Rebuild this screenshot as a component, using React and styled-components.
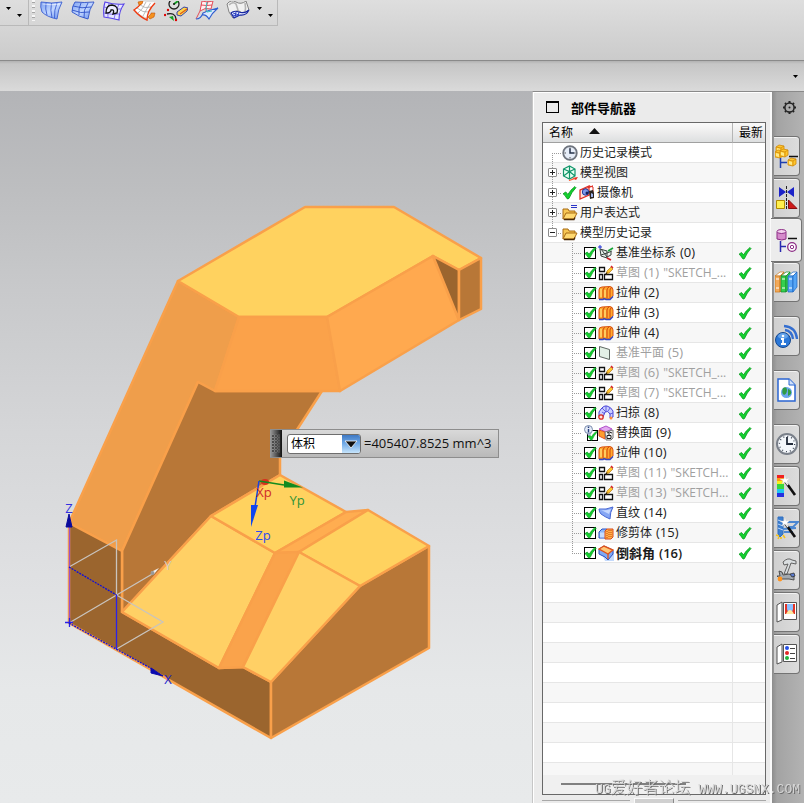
import React from 'react';
import styled, { createGlobalStyle, css } from 'styled-components';

const GlobalStyle = createGlobalStyle`
  *, *::before, *::after { box-sizing: border-box; }
  html, body { margin: 0; height: 100%; overflow: hidden; }
  #root { height: 100%; }
  body, button, input, select {
    font-family: "Open Sans", "Noto Sans CJK SC", sans-serif;
    font-size: 12px;
    color: #1c1c1c;
  }
  button, input, select { margin: 0; padding: 0; }
  svg { display: block; }
`;

const Page = styled.div`
  height: 100vh;
  display: flex;
  flex-direction: column;
  background: #d8d8d8;
`;

/* ---------- Ribbon ---------- */

const Ribbon = styled.header`
  height: 61px;
  flex: none;
  background: linear-gradient(#dedede, #cbcbcb);
  border-bottom: 1px solid #8a8a8a;
  display: flex;
  align-items: flex-start;
`;

const ToolGroup = styled.div`
  height: 26px;
  display: flex;
  align-items: flex-start;
  border-right: 1px solid #b9b9b9;
  border-bottom: 1px solid #b9b9b9;
  padding: 0 ${(p) => p.$end}px 0 ${(p) => p.$start}px;
`;

const Grip = styled.div`
  width: 3px;
  height: 21px;
  margin: 0 5px 0 3px;
  background: repeating-linear-gradient(#f6f6f6 0 2px, #a6a6a6 2px 3px, transparent 3px 5px);
`;

const ToolRow = styled.div`
  display: flex;
  gap: 7px;
  padding-right: 4px;
`;

const ToolButton = styled.button`
  width: 24px;
  height: 22px;
  border: 0;
  background: none;
`;

const CaretButton = styled.button`
  width: 11px;
  height: ${(p) => (p.$low ? 25 : 15)}px;
  border: 0;
  background: none;
  display: flex;
  align-items: flex-end;
  justify-content: center;
  padding-bottom: ${(p) => (p.$low ? 8 : 5)}px;
`;

const SubBar = styled.div`
  height: 30px;
  flex: none;
  display: flex;
  justify-content: flex-end;
  padding-right: 3px;
  background: linear-gradient(#b2b2b2, #c6c6c6 3px, #dadada);
`;

const Caret = () => (
  <svg width="5" height="3" viewBox="0 0 5 3"><path d="M0 0h5L2.5 3z" fill="#000" /></svg>
);

/* ---------- Workspace ---------- */

const Workspace = styled.div`
  flex: 1;
  min-height: 0;
  display: flex;
`;

const Canvas = styled.main`
  position: relative;
  flex: 1;
  min-width: 0;
  background: linear-gradient(#b3b4b7, #bdbec0 14%, #c8c9cb 28%, #d5d6d8 48%, #dfe0e2 68%, #e6e8e9 84%, #e8eaeb);
`;

const Scene = styled.svg`
  width: 100%;
  height: 100%;
`;

const Measure = styled.form`
  position: absolute;
  left: 270px;
  top: 338px;
  height: 29px;
  display: flex;
  align-items: center;
  border: 1px solid #8d8d8d;
  border-left: 0;
  background: linear-gradient(#d9d9d9, #b9b9b9);
  padding-right: 6px;
`;

const MeasureGrip = styled.div`
  align-self: stretch;
  display: grid;
  place-items: center;
  width: 12px;
  margin-right: 5px;
  background: linear-gradient(90deg, #9d9d9d, #4a4a4a 60%, #111);
`;

const Picker = styled.label`
  display: grid;
  grid-template-columns: 1fr 18px;
  width: 74px;
  height: 20px;
  border: 1px solid #6e6e6e;
  border-radius: 3px;
  background: #fff;
  overflow: hidden;

  svg { grid-area: 1 / 2; pointer-events: none; }
`;

const PickerSelect = styled.select`
  grid-area: 1 / 1 / 2 / 3;
  appearance: none;
  border: 0;
  background: none;
  padding-left: 3px;
  width: 100%;
  color: #000;
`;

const Reading = styled.output`
  margin-left: 3px;
  font-size: 13px;
  line-height: 18px;
  padding-bottom: 2px;
  white-space: nowrap;
  color: #111;
`;

/* ---------- Navigator ---------- */

const Panel = styled.section`
  width: 240px;
  flex: none;
  display: flex;
  flex-direction: column;
  background: #ebebeb;
  border-top: 1px solid #8a8a8a;
  border-left: 1px solid #c6c6c6;
  box-shadow: inset 1px 1px 0 #fff, inset -2px 0 0 #fafafa;
  padding: 0 6px 0 9px;
`;

const PanelTitle = styled.h1`
  margin: 0;
  height: 30px;
  display: flex;
  align-items: center;
  gap: 12px;
  padding-left: 4px;
  font-size: 13px;
  font-weight: 700;
  color: #000;
`;

const WindowBox = styled.span`
  width: 13px;
  height: 12px;
  border: 1px solid #000;
  border-top-width: 2px;
`;

const GridFrame = styled.div`
  flex: 1;
  min-height: 0;
  display: flex;
  flex-direction: column;
  border: 1px solid #686868;
  background: #f0f0f0;
`;

const GridBody = styled.div`
  flex: 1;
  min-height: 0;
  overflow: hidden;
`;

const Table = styled.table`
  width: 100%;
  table-layout: fixed;
  border-collapse: separate;
  border-spacing: 0;
`;

const HeadCell = styled.th`
  width: ${(p) => p.$width};
  height: 20px;
  padding: 0 0 0 ${(p) => p.$indent}px;
  text-align: left;
  font-weight: 400;
  line-height: 18px;
  white-space: nowrap;
  overflow: hidden;
  background: linear-gradient(#fafafa, #eeeeee 45%, #dddfe0);
  border-bottom: 1px solid #a0a0a0;
  border-right: 1px solid #b5b5b5;
  color: #000;
  &:last-child { border-right: 0; }
`;

const HeadLabel = styled.span`
  display: flex;
  align-items: center;
  gap: 16px;
  svg { margin-bottom: 3px; }
`;

const Row = styled.tr`
  background: ${(p) => (p.$alt ? '#f7f7f7' : '#ffffff')};
`;

const Cell = styled.td`
  height: 20px;
  padding: 0;
  border-bottom: 1px solid #e6e6e6;
  border-right: 1px solid #e6e6e6;
  &:last-child { border-right: 0; }
`;

const Node = styled.div`
  height: 19px;
  display: flex;
  align-items: center;
  padding-left: ${(p) => (p.$deep ? 29 : 5)}px;
  white-space: nowrap;
  overflow: hidden;
`;

const dotsDown = 'repeating-linear-gradient(#9a9a9a 0 1px, transparent 1px 2px)';
const dotsAcross = 'repeating-linear-gradient(90deg, #9a9a9a 0 1px, transparent 1px 2px)';
const reach = { all: ['0', '20px'], lower: ['10px', '10px'], upper: ['0', '10px'] };

const Branch = styled.span`
  flex: none;
  align-self: stretch;
  display: flex;
  align-items: center;
  width: ${(p) => (p.$deep ? 12 : 14)}px;
  background-repeat: no-repeat;
  ${(p) => {
    const [top, len] = reach[p.$span];
    const x = p.$deep ? '0' : '4px';
    return css`
      background-image: ${dotsDown}, ${dotsAcross};
      background-position: ${x} ${top}, ${x} 10px;
      background-size: 1px ${len}, 10px 1px;
    `;
  }}
`;

const Expander = styled.button`
  width: 9px;
  height: 9px;
  border: 1px solid #8c8c8c;
  border-radius: 1px;
  background: #fff;
  display: grid;
  place-items: center;
`;

const IconSlot = styled.span`
  flex: none;
  width: ${(p) => (p.$narrow ? 17 : 18)}px;
`;

const Tick = styled.label`
  flex: none;
  display: grid;
  width: 14px;
  height: 16px;
  align-items: center;
  svg { grid-area: 1 / 1; pointer-events: none; z-index: 1; }
`;

const TickBox = styled.input`
  grid-area: 1 / 1;
  appearance: none;
  width: ${(p) => (p.$badged ? 11 : 12)}px;
  height: ${(p) => (p.$badged ? 11 : 12)}px;
  justify-self: ${(p) => (p.$badged ? 'end' : 'start')};
  align-self: ${(p) => (p.$badged ? 'end' : 'center')};
  border: 1px solid #000;
  background: #fff;
  outline: 0;

  & + svg { justify-self: ${(p) => (p.$badged ? 'end' : 'start')}; align-self: ${(p) => (p.$badged ? 'end' : 'center')}; }
`;

const NodeText = styled.span`
  display: flex;
  align-items: baseline;
  color: ${(p) => (p.$muted ? '#a0a0a0' : '#1c1c1c')};
  font-size: ${(p) => (p.$bold ? 13 : 12)}px;
  font-weight: ${(p) => (p.$bold ? 700 : 400)};
  line-height: 18px;
`;

const NodeIndex = styled.span`
  font-size: 13px;
  font-weight: ${(p) => (p.$bold ? 600 : 400)};
  margin-left: 4px;
`;

const NodeAlias = styled.span`
  font-size: 12px;
  margin-left: 4px;
`;

const CheckSlot = styled.div`
  display: flex;
  padding-left: 5px;
`;

const ScrollStrip = styled.div`
  height: 19px;
  flex: none;
  padding: 8px 79px 0 18px;
`;

const ScrollThumb = styled.div`
  height: 2px;
  background: #808080;
`;

const PanelFoot = styled.div`
  height: 8px;
  flex: none;
  display: flex;
  gap: 4px;
  align-items: flex-end;
`;

const FootRule = styled.div`
  flex: ${(p) => p.$grow};
  height: 3px;
  border-top: 1px solid #a8a8a8;
`;

const FootHandle = styled.div`
  width: 40px;
  height: 5px;
  background: #d0d0d0;
  border: 1px solid #fafafa;
  border-right-color: #8a8a8a;
  border-bottom: 0;
`;

/* ---------- Resource bar ---------- */

const ResourceBar = styled.nav`
  width: 32px;
  flex: none;
  display: flex;
  flex-direction: column;
  align-items: flex-start;
  gap: 14px;
  background: linear-gradient(90deg, #8d8d8d, #a3a3a3 5px, #b3b3b3);
  border-top: 1px solid #8a8a8a;
`;

const GearButton = styled.button`
  width: 32px;
  height: 30px;
  border: 0;
  background: none;
  display: grid;
  place-items: center;
  padding-left: 2px;
`;

const TabGroup = styled.div`
  display: flex;
  flex-direction: column;
  gap: 2px;
`;

const Tab = styled.button`
  width: 26px;
  height: 40px;
  margin-left: 2px;
  display: grid;
  place-items: center;
  border: 1px solid #737373;
  border-left: 0;
  border-radius: 0 4px 4px 0;
  background: linear-gradient(90deg, #d0d0d0, #dcdcdc);
  box-shadow: inset 0 1px 0 #f2f2f2;
  ${(p) => p.$active && css`
    width: 31px;
    height: 44px;
    margin: -2px 0 -2px -1px;
    background: #ececec;
    padding-left: 1px;
  `}
`;

const TabStack = styled.div`
  display: flex;
  flex-direction: column;
  gap: 14px;
`;

const Watermark = styled.div`
  position: fixed;
  right: 4px;
  bottom: 3px;
  display: flex;
  align-items: baseline;
  gap: 8px;
  font-family: "Liberation Mono", "Noto Sans CJK SC", monospace;
  font-size: 13px;
  line-height: 20px;
  white-space: pre;
  color: #d6d6d6;
  text-shadow: 1px 1px 0 #6a6a6a;
  pointer-events: none;
`;

const WatermarkName = styled.span`
  font-family: "Noto Sans CJK SC", sans-serif;
  font-size: 16px;
  font-weight: 300;
`;

/* ---------- Toolbar drawings ---------- */

const SheetDefs = () => (
  <defs>
    <linearGradient id="sheet" x1="0" x2="1" y1="0" y2="1">
      <stop offset="0" stopColor="#7ea2f2" /><stop offset=".5" stopColor="#c3d7ff" /><stop offset="1" stopColor="#5f8aee" />
    </linearGradient>
  </defs>
);

const toolIcons = {
  ruled: (
    <>
      <SheetDefs />
      <path d="M1 1Q12 3 22 1Q18 8 17 18Q7 16 2 11Q0 6 1 1z" fill="url(#sheet)" stroke="#3a5ed0" strokeWidth=".9" />
      <path d="M6 2Q5 8 7 14M11.500 2Q10 9 12 17M17 2Q14 9 14.500 17" fill="none" stroke="#3a5ed0" strokeWidth=".9" />
      <path d="M2.500 3Q12 4.500 20 3" stroke="#fff" fill="none" opacity=".6" />
    </>
  ),
  mesh: (
    <>
      <path d="M4 1Q13 2 23 1Q18 8 17 18Q8 16 1 11Q1 5 4 1z" fill="url(#sheet)" stroke="#2f52c8" strokeWidth=".9" />
      <path d="M10 2Q7 8 8 14M17 2Q12 9 13 17M2 5Q11 8 20 6M1 9Q10 13 18 11" fill="none" stroke="#2f52c8" strokeWidth=".9" />
    </>
  ),
  patch: (
    <>
      <path d="M3 1Q13 4 22 3Q17 10 17 19Q9 17 2 16Q1 7 3 1z" fill="#e6e6ff" stroke="#5540e8" strokeWidth="1.100" />
      <path d="M7 2Q5 9 6 17M17 3Q13 11 12 18M2 6Q12 9 19 8M2 12Q10 14 17 13" fill="none" stroke="#6a55ee" strokeWidth=".8" />
      <path d="M4 12Q4 4 10 4Q17 5 15 12L11 13Q13 8 9 9Q9 12 4 12z" fill="#ededff" stroke="#111" strokeWidth="1.300" />
    </>
  ),
  offset: (
    <>
      <path d="M9 0Q15 2 22 1Q16 8 15 17Q8 15 1 9Q6 6 9 0z" fill="#fff" />
      <path d="M13 1Q10 8 5 12M17.500 2Q13 9 10 15M7 4Q12 8 18 6M4 7Q10 12 16 11" fill="none" stroke="#aaa" strokeWidth=".8" />
      <path d="M9 1Q6 6 1 9Q7 16 14 19Q14 10 22 2" fill="none" stroke="#ee3b12" strokeWidth="1.400" />
      <path d="M5 1l5-1-1 3-3 1zM15 16l3-3 0-1 4 0-1 4-4 2z" fill="#f5921e" stroke="#c25207" strokeWidth=".6" />
    </>
  ),
  section: (
    <>
      <circle cx="10" cy="3" r="5" fill="none" stroke="#222" strokeWidth="1.300" />
      <path d="M10 3l4-3" stroke="#119c20" strokeWidth="1.800" /><circle cx="10" cy="3" r="1" fill="#111" />
      <path d="M3 13Q11 11 12 18" fill="none" stroke="#222" strokeWidth="1.300" />
      <path d="M5 16l4-1 1 5z" fill="#12a020" />
      <path d="M13 11l7-5 4 1-1 3-6 5-4-1z" fill="#ffd54a" stroke="#2434a8" strokeWidth=".9" /><path d="M16 13l7-5" stroke="#e05a1a" strokeWidth="1.300" />
      <circle cx="4" cy="9" r="1.200" fill="#d00" /><circle cx="1" cy="14" r="1.200" fill="#d00" /><circle cx="12" cy="19" r="1.200" fill="#d00" />
    </>
  ),
  law: (
    <>
      <path d="M7 0Q12 2 18 0L16 8Q10 6 5 10z" fill="#fff0f0" stroke="#e23b48" strokeWidth=".9" />
      <path d="M5 10L1 18M13 0Q10 7 11 13M6 4Q12 5 17 4" fill="none" stroke="#e23b48" strokeWidth=".9" />
      <path d="M1 18Q6 18 8 12Q14 9 23 7Q17 12 14 18Q11 13 7 14" fill="#dbe9ff" stroke="#2f5ed0" strokeWidth="1.100" />
      <path d="M12 1Q10 8 12 11L17 10" fill="none" stroke="#35bfc0" />
    </>
  ),
  fabric: (
    <>
      <path d="M1 3Q5-2 10 1Q15 4 20 0L23 9Q18 14 13 10Q9 8 7 17Q2 12 1 3z" fill="#f1f1f1" stroke="#777" strokeWidth=".9" />
      <path d="M3 4Q7 0 10 3L12 9M19 2Q20 7 19 11" fill="none" stroke="#b4b4b4" strokeWidth="1.600" />
      <path d="M5 12Q8 9 13 11Q18 13 23 9Q20 15 14 14L8 17z" fill="#dfe5ff" stroke="#1626a0" strokeWidth="1.100" />
      <path d="M7 12l6 2M6 14l6 1M10 11l-1 5M13 11l-1 4" stroke="#1f35c0" strokeWidth=".9" />
    </>
  ),
};

const tools = [
  ['ruled', '直纹'], ['mesh', '通过曲线网格'], ['patch', '修补曲面'], ['offset', '偏置曲面'],
  ['section', '剖切曲面'], ['law', '规律延伸'], ['fabric', '曲面'],
];

/* ---------- Tree drawings ---------- */

const CheckMark = ({ size = 14 }) => (
  <svg width={size} height={size} viewBox="0 0 14 14">
    <path d="M1 8.200L3.500 6.500L5.500 8.800Q8 4.500 12 1.500L13 2.500Q9 6.500 6.500 12.500Q5.500 13.500 4.500 12.500Q3 9.500 1 8.200z" fill="#12d02e" stroke="#0a9a20" strokeWidth=".8" />
  </svg>
);

const Small = ({ children }) => <svg width="16" height="16" viewBox="0 0 16 16">{children}</svg>;

const treeIcons = {
  clock: (
    <>
      <circle cx="8" cy="8" r="6.800" fill="#e6edf8" stroke="#6e747e" strokeWidth="1.800" />
      <path d="M8 2.500v1.500M8 12v1.500M2.500 8H4M12 8h1.500" stroke="#555" />
      <path d="M8 3.500V8h4" stroke="#25324a" strokeWidth="1.500" fill="none" />
    </>
  ),
  views: (
    <>
      <path d="M1.500 4l6-3 5.500 3v7l-5.500 3-6-3zM1.500 4l6 2.500L13 4M7.500 1v13M1.500 11l6-4.500L13 11" fill="#e7fff2" stroke="#12966b" strokeWidth="1.200" />
      <path d="M10 13l6-1-2 3z" fill="#e92a1e" /><path d="M7 15.500l6-2" stroke="#ff5a34" strokeWidth="1.200" />
    </>
  ),
  camera: (
    <>
      <path d="M1 5l9-4v9l-9 4z" fill="#ffe1d8" stroke="#e03127" strokeWidth="1.300" />
      <path d="M1 5l4-1 9-3-4 1M10 1l4 1v5" fill="none" stroke="#e03127" />
      <circle cx="6.500" cy="7" r="3.200" fill="#7d98ea" stroke="#223b9c" /><circle cx="8" cy="8" r="1.500" fill="#16205a" />
      <path d="M10 6l4-1 1 3v5l-4 1z" fill="#2a2422" /><path d="M12 8l2 1v3h-2z" fill="#9fb4ee" />
    </>
  ),
  folder: (
    <>
      <path d="M1 14V4h5l1 2h6v3" fill="#f7c653" stroke="#a86b12" />
      <path d="M1 14L4 8h11l-3 6z" fill="#ffd970" stroke="#a86b12" /><path d="M2 14.500h10l1-2" stroke="#4b2b06" strokeWidth="1.300" fill="none" />
    </>
  ),
  expressions: (
    <>
      <path d="M1 14V4h5l1 2h6v3" fill="#f7c653" stroke="#a86b12" />
      <path d="M1 14L4 8h11l-3 6z" fill="#ffd970" stroke="#a86b12" /><path d="M2 14.500h10l1-2" stroke="#4b2b06" strokeWidth="1.300" fill="none" />
      <path d="M9 .500h6M9 2.500h6" stroke="#2a34c8" />
    </>
  ),
  csys: (
    <>
      <path d="M2 4l7 2v7L3 11zM3 10l6-2 5-2M9 12l4-2V7M3 4l6 8" fill="#e5efe9" stroke="#39423e" />
      <path d="M0 2h4M2 0v4" stroke="#2030d8" /><path d="M10 6l5-3" stroke="#15a536" strokeWidth="1.600" /><path d="M9 13l4 2" stroke="#d31d24" strokeWidth="1.600" />
    </>
  ),
  sketch: (
    <>
      <path d="M1.500 2.500h5v4h-5zM1.500 9.500h3v5h-3zM6.500 9.500h8v5h-8z" fill="#fff" stroke="#111" strokeWidth="1.300" />
      <path d="M8 9l1-3 4-4 2 2-4 4z" fill="#ffc52f" stroke="#a8690a" strokeWidth=".6" /><path d="M13 1l2 2" stroke="#d8202a" strokeWidth="1.500" /><path d="M7.500 9.500l1.500-2" stroke="#000" />
    </>
  ),
  extrude: (
    <>
      <path d="M1 5Q1 2 4 2L12 1.500Q15 2 15 5V11L12 14H1z" fill="#ffa92e" stroke="#d95312" />
      <path d="M5 13V5Q5 3 7 2.500M9 13V5Q9 3 11 2M12 13V5Q12 3 14 2.500" fill="none" stroke="#d0440e" />
      <path d="M3 4v8M7 5v7" stroke="#ffe07c" strokeWidth="1.300" />
      <path d="M1 14.500h4l1-1 2 1h4l3-3" fill="none" stroke="#3349c4" strokeWidth="1.400" />
    </>
  ),
  plane: <path d="M1.500 1.500l10 3v10l-10-3z" fill="#e3f0e6" stroke="#5f6862" />,
  sweep: (
    <>
      <path d="M1 7Q5 0 9 1Q13 2 15 6V12L12 13V9Q10 5 7 7L5 12L1 11z" fill="#c9cdff" stroke="#4a45d8" />
      <path d="M4 3l4 4M8 1v5M12 3l-2 3M12 9l3-1M4 7l3 2" stroke="#4a45d8" strokeWidth=".8" />
      <circle cx="3" cy="12" r="2.200" fill="#ffe1dc" stroke="#d92a22" strokeWidth="1.300" /><circle cx="13" cy="13" r="1.500" fill="#ff8b38" />
    </>
  ),
  replace: (
    <>
      <path d="M1 4l7-3 6 3-6 3z" fill="#e2a8f0" stroke="#b04fca" />
      <path d="M1 5l6 2v7l-6-3z" fill="#ff9d2e" stroke="#e0502b" /><path d="M7 7l8-2v8l-2 2H8z" fill="#f4f4f4" stroke="#777" />
      <path d="M9 8q2-2 5 0M9 10.500h4v3H9zM11 8v3" fill="none" stroke="#222" />
    </>
  ),
  ruled: (
    <>
      <path d="M1 4Q8 5 15 2Q12 7 12 14Q7 12 3 9Q1 7 1 4z" fill="#86a6f4" stroke="#4766d4" /><path d="M3 5Q8 6 13 4L11 9z" fill="#c6d7ff" />
    </>
  ),
  trim: (
    <>
      <path d="M1 7l3-3h5v9H1z" fill="#8db7f8" stroke="#2c50c4" /><path d="M2 7.500h5v5H2z" fill="#c6dcff" />
      <path d="M7 6l2-2h6v8l-2 2H7z" fill="#ffb344" stroke="#d9481a" /><path d="M9 6v7M11 5v8M13 5v8" stroke="#cf3b1a" strokeDasharray="1 1" />
    </>
  ),
  chamfer: (
    <>
      <path d="M3 6h13v10H7z" fill="#c3d9fb" />
      <path d="M1 4l5-3 9 4v4l-5 6-3-3-6-3z" fill="#7ea9f6" stroke="#2c50c4" />
      <path d="M1 4l5-3 9 4-5 4z" fill="#ffc878" stroke="#e0531a" strokeWidth="1.400" /><path d="M10 9v5" stroke="#e0531a" strokeWidth="1.300" />
    </>
  ),
};

const roots = [
  { icon: 'clock', name: '历史记录模式', span: 'lower' },
  { icon: 'views', name: '模型视图', span: 'all', mark: '+' },
  { icon: 'camera', name: '摄像机', span: 'all', mark: '+', ok: true },
  { icon: 'expressions', name: '用户表达式', span: 'all', mark: '+' },
  { icon: 'folder', name: '模型历史记录', span: 'upper', mark: '-' },
];

const features = [
  { icon: 'csys', name: '基准坐标系', index: 0 },
  { icon: 'sketch', name: '草图', index: 1, alias: '"SKETCH_...', muted: true },
  { icon: 'extrude', name: '拉伸', index: 2 },
  { icon: 'extrude', name: '拉伸', index: 3 },
  { icon: 'extrude', name: '拉伸', index: 4 },
  { icon: 'plane', name: '基准平面', index: 5, muted: true },
  { icon: 'sketch', name: '草图', index: 6, alias: '"SKETCH_...', muted: true },
  { icon: 'sketch', name: '草图', index: 7, alias: '"SKETCH_...', muted: true },
  { icon: 'sweep', name: '扫掠', index: 8 },
  { icon: 'replace', name: '替换面', index: 9, info: true },
  { icon: 'extrude', name: '拉伸', index: 10 },
  { icon: 'sketch', name: '草图', index: 11, alias: '"SKETCH...', muted: true },
  { icon: 'sketch', name: '草图', index: 13, alias: '"SKETCH...', muted: true },
  { icon: 'ruled', name: '直纹', index: 14 },
  { icon: 'trim', name: '修剪体', index: 15 },
  { icon: 'chamfer', name: '倒斜角', index: 16, bold: true },
];

const InfoBadge = () => (
  <svg width="14" height="16" viewBox="0 0 14 16">
    <path d="M3 8l2 3 2-3z" fill="#d6e0f2" stroke="#7b8cac" strokeWidth=".8" />
    <circle cx="4.500" cy="4.500" r="4" fill="#e4ebf8" stroke="#7b8cac" />
    <path d="M4.500 4V7.500M4.500 1.500V3" stroke="#223a7a" strokeWidth="1.400" />
  </svg>
);

/* ---------- Resource bar drawings ---------- */

const Wand = () => (
  <>
    <path d="M10 7l10 14" stroke="#111" strokeWidth="2.600" /><path d="M10 7l3 4" stroke="#eee" strokeWidth="1.500" />
    <path d="M10 1l1 4 4-1-3 3 2 3-4-2-3 2 1-3-3-2 4 0z" fill="#fff" stroke="#ccc" strokeWidth=".4" />
  </>
);

const Cube = ({ x, y }) => (
  <g transform={`translate(${x} ${y})`} stroke="#d08a0a" strokeWidth=".8">
    <path d="M0 2l3-2 5 1v5L5 8 0 7z" fill="#ffc62c" /><path d="M0 2l5 1 3-2M5 3v5" fill="none" /><path d="M1 3l3 1v3L1 6z" fill="#ffe98a" stroke="none" />
  </g>
);

const Book = ({ x, front, back }) => (
  <g transform={`translate(${x} 0)`}>
    <path d="M0 6l5-4h4L5 6z" fill="#fff" stroke={back} strokeWidth=".7" />
    <path d="M0 6h5v16H0z" fill={front} stroke={back} strokeWidth=".7" /><path d="M5 6l4-4v15l-4 5z" fill={front} stroke={back} strokeWidth=".7" />
    <path d="M1 9h3M1 18h3" stroke="#fff" />
  </g>
);

const tabIcons = {
  assembly: (
    <>
      <Cube x={1} y={1} /><Cube x={0} y={6} /><Cube x={5} y={5} /><Cube x={13} y={14} />
      <path d="M14 12.500h9" stroke="#111" strokeWidth="1.500" /><path d="M5.500 14v10M5 18.500h7" stroke="#1d3fb0" strokeWidth="1.500" fill="none" />
    </>
  ),
  constraint: (
    <>
      <path d="M4 1v10l7-5zM19 1v10l-7-5z" fill="#1b22c8" /><path d="M11.500 0v24" stroke="#222" strokeDasharray="3 1" />
      <path d="M1.500 14.500h8v8h-8z" fill="#fff04d" stroke="#b18a00" /><path d="M13.500 14v8.500H22z" fill="#cf1a1a" stroke="#8a0d0d" />
    </>
  ),
  part: (
    <>
      <path d="M2 4v7q5 2 9 0V4" fill="#d58acb" stroke="#8d2d86" /><ellipse cx="6.500" cy="3.500" rx="4.500" ry="2" fill="#f3d3ef" stroke="#8d2d86" />
      <path d="M13 10.500h9" stroke="#111" strokeWidth="1.500" /><path d="M5.500 13v11M5 18.500h6" stroke="#2a2ab0" strokeWidth="1.500" fill="none" />
      <circle cx="17" cy="19" r="4.300" fill="#fff" stroke="#8d2d86" strokeWidth="1.300" /><circle cx="17" cy="19" r="1.700" fill="none" stroke="#8d2d86" />
    </>
  ),
  reuse: (
    <><Book x={0} front="#f2a95a" back="#c9751a" /><Book x={6} front="#34cf4e" back="#138a2c" /><Book x={13} front="#55a5f5" back="#1b64c2" /></>
  ),
  web: (
    <>
      <circle cx="8" cy="16" r="7.500" fill="#2b78d8" stroke="#14478f" /><ellipse cx="8" cy="12" rx="5" ry="3" fill="#8cc0f5" opacity=".6" />
      <path d="M8 15v5M6 15h3M6 20h5" stroke="#fff" strokeWidth="1.800" /><circle cx="8" cy="12" r="1.300" fill="#fff" />
      <path d="M10 6q7 1 8 9M9 2q12 1 13 13" fill="none" stroke="#356fd0" strokeWidth="2.300" />
    </>
  ),
  browser: (
    <>
      <path d="M3 1h11l6 6v16H3z" fill="#fff" stroke="#2b66d2" strokeWidth="1.500" /><path d="M14 1v6h6" fill="#cfe0fa" stroke="#2b66d2" />
      <circle cx="11.500" cy="14.500" r="5.500" fill="#6aa5ec" /><path d="M8 10q4-2 4 2t-3 5q-3-2-1-7zM13 11q4 1 3 5l-3 2z" fill="#2f9a45" />
    </>
  ),
  history: (
    <>
      <circle cx="12" cy="12" r="10" fill="#f4f7fb" stroke="#7a808a" strokeWidth="2" /><circle cx="12" cy="12" r="7.600" fill="none" stroke="#3c4654" strokeDasharray="1 2.980" strokeWidth="1.300" />
      <path d="M12 5v7h6" fill="none" stroke="#222b3a" strokeWidth="1.800" />
    </>
  ),
  spectrum: (
    <>
      <path d="M2 1h7v3H2z" fill="#f02020" /><path d="M2 4h7v3H2z" fill="#ff9b12" /><path d="M2 7h7v3H2z" fill="#f8ee1e" /><path d="M2 10h7v5H2z" fill="#38d83c" /><path d="M2 15h7v4H2z" fill="#1ec6f0" /><path d="M2 19h7v4H2z" fill="#2430e0" />
      <Wand />
    </>
  ),
  machining: (
    <>
      <path d="M3 1h5v17l-3 3-2-3z" fill="#3c7fd0" stroke="#2f6fc0" /><path d="M3 4l5 2M3 8l5 2M3 12l5 2" stroke="#bcd7fa" />
      <path d="M1 19l3 1M8 19l2 3M3 23l1-2M6 21v2" stroke="#f5c21d" strokeWidth="1.600" /><path d="M12 6h11l-5 5h-6M8 13l13-1M9 16h9" stroke="#4a86d2" fill="none" strokeWidth="1.800" />
      <Wand />
    </>
  ),
  mechanism: (
    <>
      <path d="M8 4Q13-1 17 2L21 3V6L16 5L12 16H9L13 6L9 7z" fill="#dadee0" stroke="#555" strokeWidth=".9" />
      <path d="M4 13l3 1 1 3 6-1 5 2v4l-5-1-9 0-3-3 3 0z" fill="#a3a9af" stroke="#444" strokeWidth=".9" /><circle cx="5" cy="21" r="2.400" fill="#ff941e" /><path d="M15 16l4-1 1 3-3 1z" fill="#5a7bd0" stroke="#333" strokeWidth=".8" />
    </>
  ),
  visual: (
    <>
      <path d="M2 5l5-3v18l-5 2z" fill="#fff" stroke="#555" /><path d="M8.500 2.500h13v17h-13z" fill="#fff" stroke="#555" />
      <path d="M10 4h10v10H10z" fill="#e33425" /><path d="M12 4h6v5l-1 3h-4l-1-3z" fill="#8cc0ff" /><path d="M11 14q4-8 8 0z" fill="#ffe9a0" />
    </>
  ),
  roles: (
    <>
      <path d="M2 5l5-3v18l-5 2z" fill="#fff" stroke="#555" /><path d="M8.500 2.500h13v17h-13z" fill="#fff" stroke="#555" />
      <circle cx="12" cy="6" r="2" fill="#2450e8" /><circle cx="12" cy="11" r="2" fill="#e02828" /><circle cx="12" cy="16" r="2" fill="#1fb43a" />
      <path d="M15 6.500h5M15 11.500h5M15 16.500h5" stroke="#444" />
    </>
  ),
};

const tabGroups = [
  [['assembly', '装配导航器'], ['constraint', '约束导航器'], ['part', '部件导航器'], ['reuse', '重用库']],
  [['web', 'HD3D 工具']],
  [['browser', 'Web 浏览器']],
  [['history', '历史记录'], ['spectrum', '系统材料'], ['machining', '加工向导'], ['mechanism', '机构'], ['visual', '可视化场景'], ['roles', '角色']],
];

/* ---------- 3D scene ---------- */

const edge = '#f9a04a';

const faces = [
  ['178,281 239,317 215,391 198,382 122,551 69,523', '#ef9e4b'],
  ['198,382 215,391 322,391 280,456 280,475 211,516 122,612 122,551', '#b87737'],
  ['178,281 305,207 394,207 481,258 459,270 433,256 327,317 239,317', '#ffd25f'],
  ['239,317 327,317 340,391 215,391', '#fba24a'],
  ['327,317 433,256 459,320 340,391', '#ffa94f'],
  ['433,256 459,270 459,320', '#9b652e'],
  ['459,270 481,258 481,309 459,320', '#b87737'],
  ['69,523 122,551 122,612 219,668 243,667 271,682 271,738 69,623', '#9b652e'],
  ['271,682 360,586 429,546 429,648 271,738', '#b87737'],
  ['122,612 211,516 275,553 219,668', '#ffd065'],
  ['211,516 280,475 346,512 275,553', '#ffd25f'],
  ['275,553 346,512 368,510 299,552', '#ffad50'],
  ['275,553 299,552 243,667 219,668', '#faa34b'],
  ['299,552 368,510 429,546 360,586', '#ffd25f'],
  ['299,552 360,586 271,682 243,667', '#ffd065'],
];

const Label = styled.text`
  font-family: "Open Sans", sans-serif;
  font-size: 13px;
  text-anchor: middle;
`;

const Model = () => (
  <Scene viewBox="0 91 532 712" preserveAspectRatio="xMinYMin meet" role="img" aria-label="三维模型">
    {faces.map(([points, fill]) => (
      <polygon key={points} points={points} fill={fill} stroke={edge} strokeWidth="2.500" strokeLinejoin="round" />
    ))}
    <g fill="none" stroke="#c9c4be" strokeWidth="1.300">
      <path d="M69 567L116.500 540V595M69 623L154 573M116.500 595L163 622L116.500 649" />
    </g>
    <g fill="none" stroke="#2a22e8" strokeWidth="1.300">
      <path d="M69.500 525V623" stroke="#9a52c8" /><path d="M116.500 595V649M65 622.500h8M69.500 618v9" />
      <path d="M69 567L116.500 595M69 623L154 670" stroke="#1010d8" strokeDasharray="2 1" />
    </g>
    <path d="M69 514l3 13h-6z" fill="#0a0a9c" stroke="#0a0a9c" /><path d="M163 676l-12-8v5z" fill="#0a0ab0" stroke="#0a0ab0" />
    <path d="M151 572l8-4-5 6z" fill="#f2f2f2" /><circle cx="152.500" cy="573" r="2" fill="#999" />
    <Label x="69" y="513" fill="#3131e0">Z</Label>
    <Label x="168" y="684" fill="#2020d0">X</Label>
    <Label x="168" y="570" fill="#cfcac4">Y</Label>
    <ellipse cx="265" cy="482" rx="4" ry="3" fill="#d8301e" />
    <path d="M259 481L284 485" stroke="#138a1e" strokeWidth="1.500" /><path d="M303 487.500l-19-7v7z" fill="#128a20" />
    <path d="M259 481L255 507" stroke="#1540e8" strokeWidth="1.500" /><path d="M251 527l0-22h7z" fill="#1046f0" />
    <Label x="264" y="497" fill="#d02a2a">Xp</Label>
    <Label x="297" y="505" fill="#2f9438">Yp</Label>
    <Label x="263" y="540" fill="#2c4cf0">Zp</Label>
  </Scene>
);

const FILLER_ROWS = 40;

function RootRow({ node, alt }) {
  return (
    <Row $alt={alt}>
      <Cell>
        <Node>
          <Branch $span={node.span}>
            {node.mark && (
              <Expander aria-label={node.name}>
                <svg width="5" height="5" viewBox="0 0 5 5"><path d={node.mark === '+' ? 'M0 2h5v1H0zM2 0h1v5H2z' : 'M0 2h5v1H0z'} fill="#222" /></svg>
              </Expander>
            )}
          </Branch>
          {node.ok && <IconSlot $narrow><CheckMark size={15} /></IconSlot>}
          <IconSlot><Small>{treeIcons[node.icon]}</Small></IconSlot>
          <NodeText>{node.name}</NodeText>
        </Node>
      </Cell>
      <Cell />
    </Row>
  );
}

function FeatureRow({ node, alt }) {
  return (
    <Row $alt={alt}>
      <Cell>
        <Node $deep>
          <Branch $deep $span={node.bold ? 'upper' : 'all'} />
          <Tick>
            <TickBox type="checkbox" defaultChecked aria-label={`${node.name} (${node.index})`} $badged={node.info} />
            <CheckMark size={node.info ? 11 : 13} />
            {node.info && <InfoBadge />}
          </Tick>
          <IconSlot><Small>{treeIcons[node.icon]}</Small></IconSlot>
          <NodeText $muted={node.muted} $bold={node.bold}>
            {node.name}
            <NodeIndex $bold={node.bold}>({node.index})</NodeIndex>
            {node.alias && <NodeAlias>{node.alias}</NodeAlias>}
          </NodeText>
        </Node>
      </Cell>
      <Cell><CheckSlot><CheckMark /></CheckSlot></Cell>
    </Row>
  );
}

function ResourceColumn() {
  return (
    <ResourceBar>
      <GearButton aria-label="资源条选项">
        <svg width="15" height="15" viewBox="0 0 15 15">
          <circle cx="7.500" cy="7.500" r="4.600" fill="none" stroke="#222" strokeWidth="1.500" />
          <path d="M7.500 1v2M7.500 12v2M1 7.500h2M12 7.500h2M3 3l1 1M11 11l1 1M3 12l1-1M11 4l1-1" stroke="#222" strokeWidth="2" />
          <circle cx="7.500" cy="7.500" r="1" fill="#222" />
        </svg>
      </GearButton>
      <TabStack>
        {tabGroups.map((group) => (
          <TabGroup key={group[0][0]}>
            {group.map(([id, label]) => (
              <Tab key={id} aria-label={label} $active={id === 'part'}>
                <svg width="24" height="24" viewBox="0 0 24 24">{tabIcons[id]}</svg>
              </Tab>
            ))}
          </TabGroup>
        ))}
      </TabStack>
    </ResourceBar>
  );
}

export default function App() {
  return (
    <Page>
      <GlobalStyle />
      <Ribbon>
        <ToolGroup $start={3} $end={3}>
          <CaretButton aria-label="更多"><Caret /></CaretButton>
          <CaretButton $low aria-label="工具条选项"><Caret /></CaretButton>
        </ToolGroup>
        <ToolGroup $start={0} $end={1}>
          <Grip />
          <ToolRow>
            {tools.map(([id, label]) => (
              <ToolButton key={id} aria-label={label}>
                <svg width="24" height="21" viewBox="0 0 24 21">{toolIcons[id]}</svg>
              </ToolButton>
            ))}
          </ToolRow>
          <CaretButton aria-label="更多曲面"><Caret /></CaretButton>
          <CaretButton $low aria-label="工具条选项"><Caret /></CaretButton>
        </ToolGroup>
      </Ribbon>
      <SubBar>
        <CaretButton $low aria-label="选项"><Caret /></CaretButton>
      </SubBar>
      <Workspace>
        <Canvas>
          <Model />
          <Measure>
            <MeasureGrip>
              <svg width="8" height="20" viewBox="0 0 8 20">
                {[1, 4, 7, 10, 13, 16].map((y) => (
                  <path key={y} d={`M0 ${y}h2v2H0zM3 ${y}h2v2H3zM6 ${y}h2v2H6z`} fill="#1b1b1b" stroke="#a8a8a8" strokeWidth=".4" />
                ))}
              </svg>
            </MeasureGrip>
            <Picker>
              <PickerSelect aria-label="测量类型" defaultValue="体积">
                <option>体积</option>
                <option>面积</option>
              </PickerSelect>
              <svg width="18" height="18" viewBox="0 0 18 18">
                <defs>
                  <linearGradient id="pick" x1="0" x2="0" y1="0" y2="1"><stop offset="0" stopColor="#3f79c4" /><stop offset=".45" stopColor="#6ea8e6" /><stop offset="1" stopColor="#c6e4fb" /></linearGradient>
                </defs>
                <path d="M0 0h18v18H0z" fill="url(#pick)" /><path d="M3 6h12l-6 7z" fill="#111" stroke="#fff" strokeWidth=".8" />
              </svg>
            </Picker>
            <Reading>=405407.8525 mm^3</Reading>
          </Measure>
        </Canvas>
        <Panel>
          <PanelTitle><WindowBox />部件导航器</PanelTitle>
          <GridFrame>
            <GridBody>
              <Table>
                <thead>
                  <tr>
                    <HeadCell $width="auto" $indent={6}>
                      <HeadLabel>名称<svg width="11" height="6" viewBox="0 0 11 6"><path d="M5.500 0L11 6H0z" fill="#111" /></svg></HeadLabel>
                    </HeadCell>
                    <HeadCell $width="32px" $indent={6}>最新</HeadCell>
                  </tr>
                </thead>
                <tbody>
                  {roots.map((node, i) => <RootRow key={node.name} node={node} alt={i % 2 === 1} />)}
                  {features.map((node, i) => <FeatureRow key={node.index} node={node} alt={i % 2 === 0} />)}
                  {Array.from({ length: FILLER_ROWS }, (_, i) => (
                    <Row key={i} $alt={i % 2 === 0}><Cell /><Cell /></Row>
                  ))}
                </tbody>
              </Table>
            </GridBody>
            <ScrollStrip><ScrollThumb /></ScrollStrip>
          </GridFrame>
          <PanelFoot><FootRule $grow={1} /><FootHandle /><FootRule $grow={1} /></PanelFoot>
        </Panel>
        <ResourceColumn />
      </Workspace>
      <Watermark><span>UG<WatermarkName>爱好者论坛</WatermarkName></span><span>WWW.UGSNX.COM</span></Watermark>
    </Page>
  );
}
